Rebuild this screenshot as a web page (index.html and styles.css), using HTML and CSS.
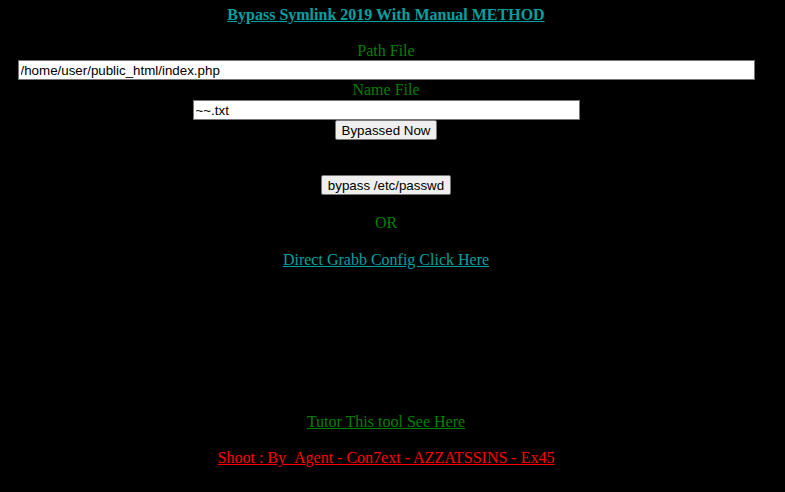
FILE: index.html
```html
<!DOCTYPE html>
<html>
<head>
<meta charset="utf-8">
<title>Bypass Symlink</title>
<link rel="stylesheet" href="styles.css">
</head>
<body>
<div class="page">
  <div class="title"><a href="#" class="title-link">Bypass Symlink 2019 With Manual METHOD</a></div>
  <form class="form">
    <div class="label label-first">Path File</div>
    <input class="field field-path" type="text" value="/home/user/public_html/index.php">
    <div class="label label-second">Name File</div>
    <input class="field field-name" type="text" value="~~.txt">
    <div class="btn-row"><button type="button" class="btn">Bypassed Now</button></div>
  </form>
  <div class="btn-row passwd-row"><button type="button" class="btn">bypass /etc/passwd</button></div>
  <div class="line or">OR</div>
  <div class="line direct"><a href="#" class="cyan-link">Direct Grabb Config Click Here</a></div>
  <div class="line tutor"><a href="#" class="green-link">Tutor This tool See Here</a></div>
  <div class="line shoot"><a href="#" class="red-link">Shoot : By_Agent - Con7ext - AZZATSSINS - Ex45</a></div>
</div>
</body>
</html>
```
FILE: styles.css
```css
html, body {
  margin: 0;
  padding: 0;
  background: #000;
}
body {
  font-family: "Liberation Serif", "Times New Roman", serif;
  font-size: 16px;
  line-height: 19px;
}
.page {
  width: 772px;
  padding-top: 5px;
  text-align: center;
}
.title {
  font-weight: bold;
}
.title-link {
  color: #00a0a0;
}
.form {
  margin: 0;
}
.label {
  color: #008000;
  height: 19px;
}
.label-first {
  margin-top: 17px;
}
.label-second {
  height: 20px;
  line-height: 20px;
}
.field {
  display: block;
  box-sizing: border-box;
  height: 20px;
  margin: 0 auto;
  padding: 1px 2px;
  border: 1px solid #767676;
  background: #fff;
  color: #000;
  font-family: "Liberation Sans", Arial, sans-serif;
  font-size: 13.33px;
}
.field-path {
  width: 737px;
}
.field-name {
  width: 387px;
}
.btn-row {
  height: 20px;
}
.btn {
  box-sizing: border-box;
  height: 20px;
  padding: 1px 6px;
  border: 1px solid #767676;
  border-radius: 2px;
  background: #efefef;
  color: #000;
  font-family: "Liberation Sans", Arial, sans-serif;
  font-size: 13.33px;
  line-height: 15px;
  vertical-align: top;
}
.passwd-row {
  margin-top: 35px;
}
.line {
  height: 19px;
}
.or {
  margin-top: 18px;
  color: #008000;
}
.direct {
  margin-top: 18px;
}
.cyan-link {
  color: #00a0a0;
}
.tutor {
  margin-top: 143px;
}
.green-link {
  color: #008000;
}
.shoot {
  margin-top: 17px;
}
.red-link {
  color: #ff0000;
}
```
